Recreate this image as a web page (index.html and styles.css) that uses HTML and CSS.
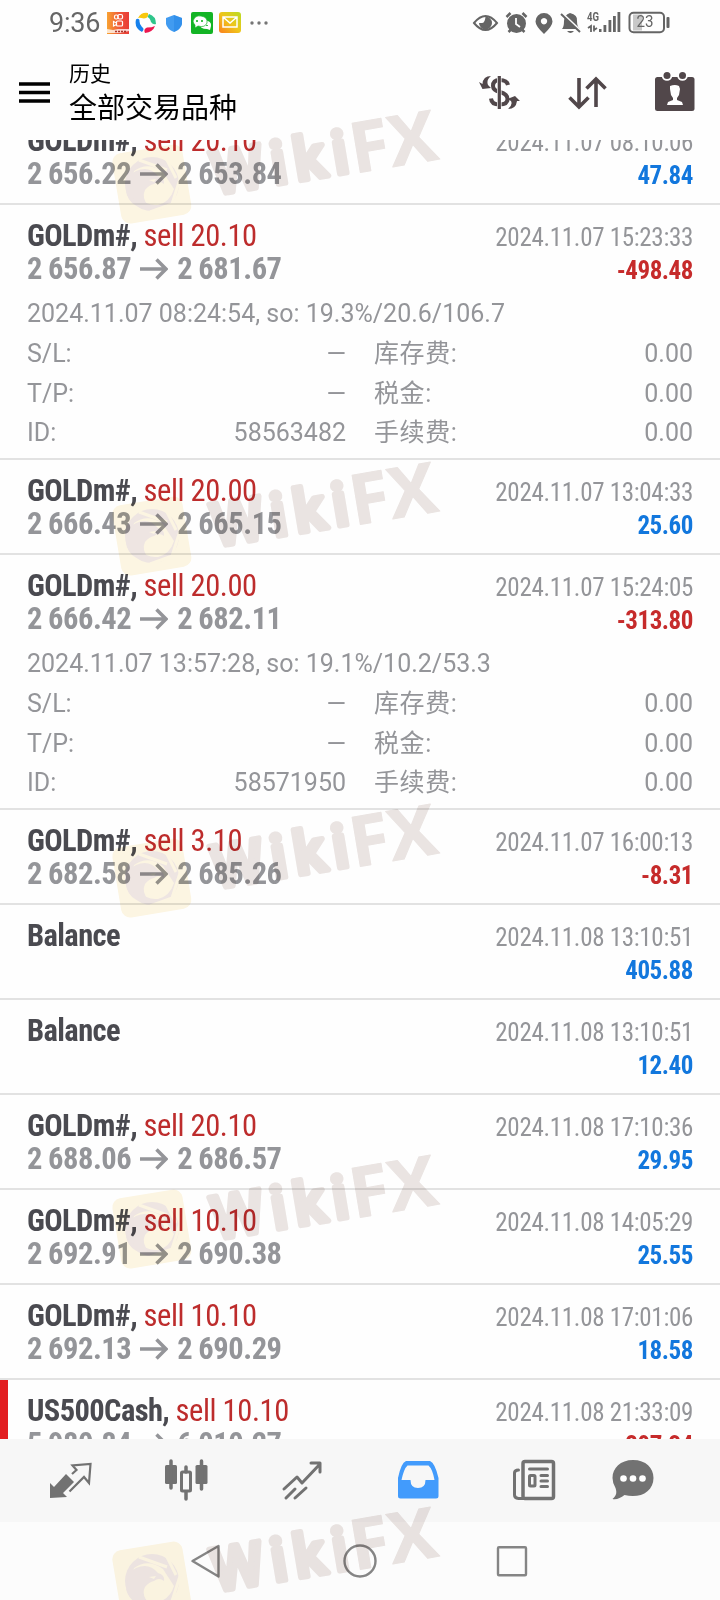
FILE: index.html
```html
<!DOCTYPE html>
<html lang="zh-CN">
<head>
<meta charset="utf-8">
<title>历史</title>
<link rel="stylesheet" href="styles.css">
</head>
<body>
<svg width="0" height="0" class="defs">
  <symbol id="arrow" viewBox="0 0 28 22"><path d="M0 11H26M16.500 1.500L26 11L16.500 20.500" fill="none" stroke="#949599" stroke-width="3.500"/></symbol>
  <symbol id="mark" viewBox="0 0 340 130" overflow="visible">
    <rect x="10.500" y="43.500" width="71" height="71" rx="9" fill="#fdf6e3" transform="rotate(-9.500 46 80)"/>
    <circle cx="46" cy="79" r="27" fill="#efe6e3"/>
    <path d="M28 66Q42 56 57 67L68 84Q64 97 52 100Q40 101 34 92L26 76Z" fill="#fdf6e3"/>
    <path d="M33 55L61 65M59 51L70 73M74 74L66 99M69 98L44 107" stroke="#fdf6e3" stroke-width="3"/>
    <path d="M23 88Q18 72 30 66Q43 60 52 71Q59 73 58 79Q53 75 48 79Q43 80 39 85Q35 93 43 102Q31 101 26 91Q25 96 30 101Q21 95 20 86Z" fill="#efe6e3"/>
    <path d="M43 75l7-1-2 3z" fill="#fdf6e3"/>
    <g transform="translate(107 92) rotate(-9.500)" fill="#ebe5e3" stroke="#ebe5e3" stroke-linejoin="round">
      <text class="mark-text" x="2" y="-2" stroke-width="5.500" textLength="138" lengthAdjust="spacing">Wiki</text>
      <text class="mark-text mark-fx" x="143" y="0" stroke-width="1" textLength="87" lengthAdjust="spacingAndGlyphs">FX</text>
    </g>
  </symbol>
</svg>
<div class="phone">
  <div class="status">
    <span class="clock">9:36</span>
    <div class="apps">
      <svg width="22" height="22" viewBox="107 12 22 22"><defs><linearGradient id="g1"><stop stop-color="#f8a332"/><stop offset=".6" stop-color="#ef5238"/><stop offset="1" stop-color="#e83c37"/></linearGradient></defs><path fill="url(#g1)" d="M107 12h22v22h-22z"/><g fill="none" stroke="#fff" stroke-width="1.200"><rect x="114.500" y="15" width="3.500" height="4" rx="1.500"/><rect x="118" y="14.500" width="4.500" height="4.500" rx="1.500"/><rect x="116.500" y="21" width="6" height="5" rx="1"/><path d="M116.500 23l-3-1.500v4.500l3-1.500"/></g><path d="M107 29l6 1 5-1 11 0v2l-9 2-13 0z" fill="#fff" opacity=".75"/><path d="M115 31.500h11" stroke="#a8332a" stroke-width="1.500" stroke-dasharray="2 1"/></svg>
      <svg width="22" height="22" viewBox="135 12 22 22"><path fill="#f9c80d" d="M138 18Q141 12 148 13Q149 18 144 18.500Q140 17.500 138 18"/><path fill="#2fc58b" d="M149 14Q156 16 156 24Q153 25 151 22Q150 18 147.500 17"/><path fill="#ed174f" d="M155 26Q153 32 145 33Q143 29 147 27.500Q152 27.500 155 26"/><path fill="#1580ec" d="M136 19.500Q134 28 142 32Q145 29 142 27Q139 24 139.500 20Q138 18 136 19.500"/></svg>
      <svg width="22" height="22" viewBox="163 12 22 22"><path fill="#419bf0" d="M174 15l8 3v6q-1 5-8 8q-7-3-8-8v-6z"/><path fill="#2386e5" d="M174 15l8 3v6q-1 5-8 8z" opacity=".5"/></svg>
      <svg width="22" height="22" viewBox="191 12 22 22"><rect x="191" y="12" width="22" height="22" rx="2" fill="#13b425"/><path fill="#fff" d="M204 20q8 1 7 6l-1 4-3-1q-7 0-8-5z"/><path d="M193 21q2-6 8-5q7 1 6 7q-2 5-9 3l-3 2v-3q-2-2-2-4" fill="#fff" stroke="#13b425" stroke-width=".7"/><path d="M197 20v2M202 20v2M207 25v1" stroke="#13b425" stroke-width="1.600"/></svg>
      <svg width="22" height="22" viewBox="219 12 22 22"><defs><linearGradient id="g2" x2="1" y1="1" y2="0"><stop stop-color="#fb7f1d"/><stop offset=".5" stop-color="#efc51b"/><stop offset="1" stop-color="#b9dc24"/></linearGradient></defs><rect x="219" y="12" width="22" height="21" rx="3" fill="url(#g2)"/><path d="M223 17h14v10h-14zl7 6 7-6" fill="none" stroke="#fff" stroke-width="1.500"/></svg>
      <svg width="22" height="22" viewBox="247 12 22 22" fill="#757575"><circle cx="252" cy="23" r="1.700"/><circle cx="259" cy="23" r="1.700"/><circle cx="266" cy="23" r="1.700"/></svg>
    </div>
    <svg class="signals" width="200" height="24" viewBox="472 11 200 24" fill="#656565">
      <path d="M474 23Q485.500 9 497 23Q485.500 37 474 23Z" fill="none" stroke="#656565" stroke-width="2"/><path d="M485.500 16.500a6.500 6.500 0 1 1-6.500 6.500h2q4 1 4.500-6.500"/>
      <circle cx="516.500" cy="23.500" r="9.500"/><path d="M506.500 17l4-4M526.500 17l-4-4M508.500 32l3-3M524.500 32l-3-3" stroke="#656565" stroke-width="2.500"/><path d="M516 18v6l4 3" stroke="#fff" stroke-width="1.800" fill="none"/>
      <path fill-rule="evenodd" d="M544 34Q535.500 26 535.500 21.500a8.500 8.500 0 0 1 17 0Q552.500 26 544 34zm0-16a3.200 3.200 0 1 0 .01 0z"/>
      <path d="M562 29q2-2 2-8 0-6 6-8 8 2 7 8 0 6 3 8zM567 31h7q-3.500 4-7 0"/><path d="M562 13l19 18" stroke="#fefefe" stroke-width="2"/><path d="M561 14l19 18" stroke="#656565" stroke-width="2"/>
      <text class="g4" x="587" y="21" textLength="12" lengthAdjust="spacingAndGlyphs">4G</text>
      <path d="M588 28l3-2v6M594 25.500v6M594 30l3-2" fill="none" stroke="#656565" stroke-width="1.800"/><path d="M599 29h2.500v3H599zM603.500 25h2.800v7h-2.800zM608.500 20h2.800v12h-2.800zM613 16h2.800v16H613zM617.500 12h2.800v20h-2.800z"/>
      <rect x="633" y="14.500" width="9" height="16" fill="#c8c8c8"/><rect x="629.500" y="12.800" width="34.500" height="19.500" rx="4" fill="none" stroke="#656565" stroke-width="2"/><rect x="666.500" y="17" width="3" height="11" rx="1"/>
      <text class="batt" x="636.500" y="27" textLength="17" lengthAdjust="spacingAndGlyphs">23</text>
    </svg>
  </div>
  <header class="header">
    <svg class="menu" width="32" height="22" viewBox="19 82 32 22"><path d="M19 84h31M19 92.500h31M19 101h31" stroke="#000" stroke-width="3.500"/></svg>
    <div class="titles"><div class="t1">历史</div><div class="t2">全部交易品种</div></div>
    <svg width="42" height="42" viewBox="479 71 42 42" fill="#51474a"><path d="M508 85Q507 80 499.500 80Q493 80 493 86Q493 90.500 500 92Q507.500 94 507.500 99Q507.500 104.500 499.500 104.500Q491.500 104.500 491 98.500" fill="none" stroke="#51474a" stroke-width="4"/><path d="M499.300 76v33" stroke="#fff" stroke-width="4.500"/><path d="M499.300 76v33" stroke="#51474a" stroke-width="3.200"/><path d="M479 82l3.500 7 8.500-1-3-3q-2-5 3-9-8 0-8.500 8zM520 101l-5-5-8 3 4 2q2 4-3 8 8 0 9-8z"/></svg>
    <svg class="sort" width="42" height="42" viewBox="567 71 42 42"><path d="M579 78v29M569.500 97.500l9.500 9.500 9.500-9.500M596 107V79M586.500 88.500L596 79l9.500 9.500" fill="none" stroke="#51474a" stroke-width="3.600"/></svg>
    <svg width="42" height="42" viewBox="654 71 42 42"><rect x="655" y="77" width="39.500" height="34" rx="2.500" fill="#51474a"/><circle cx="667" cy="75.500" r="5.300" fill="#fff"/><circle cx="682.500" cy="75.500" r="5.300" fill="#fff"/><circle cx="667" cy="75.500" r="3.500" fill="#51474a"/><circle cx="682.500" cy="75.500" r="3.500" fill="#51474a"/><path fill="#fff" d="M670 86q5-2 9 0l1 3-1 6-2 3v2l5 2 1 3h-16l1-3 5-2v-2l-2-3-1-6z"/></svg>
  </header>
  <main class="list">
    <section class="deal first"><div class="l"><div class="name"><b>GOLDm#,</b> <span>sell 20.10</span></div><div class="price">2 656.22<svg><use href="#arrow"/></svg>2 653.84</div></div><div class="r"><div class="date">2024.11.07 08:10:06</div><div class="up">47.84</div></div></section>
    <section class="deal"><div class="l"><div class="name"><b>GOLDm#,</b> <span>sell 20.10</span></div><div class="price">2 656.87<svg><use href="#arrow"/></svg>2 681.67</div></div><div class="r"><div class="date">2024.11.07 15:23:33</div><div class="down">-498.48</div></div></section>
    <div class="detail"><p>2024.11.07 08:24:54, so: 19.3%/20.6/106.7</p><dl><dt>S/L:</dt><dd>—</dd><dt class="c">库存费:</dt><dd>0.00</dd><dt>T/P:</dt><dd>—</dd><dt class="c">税金:</dt><dd>0.00</dd><dt>ID:</dt><dd>58563482</dd><dt class="c">手续费:</dt><dd>0.00</dd></dl></div>
    <section class="deal"><div class="l"><div class="name"><b>GOLDm#,</b> <span>sell 20.00</span></div><div class="price">2 666.43<svg><use href="#arrow"/></svg>2 665.15</div></div><div class="r"><div class="date">2024.11.07 13:04:33</div><div class="up">25.60</div></div></section>
    <section class="deal"><div class="l"><div class="name"><b>GOLDm#,</b> <span>sell 20.00</span></div><div class="price">2 666.42<svg><use href="#arrow"/></svg>2 682.11</div></div><div class="r"><div class="date">2024.11.07 15:24:05</div><div class="down">-313.80</div></div></section>
    <div class="detail"><p>2024.11.07 13:57:28, so: 19.1%/10.2/53.3</p><dl><dt>S/L:</dt><dd>—</dd><dt class="c">库存费:</dt><dd>0.00</dd><dt>T/P:</dt><dd>—</dd><dt class="c">税金:</dt><dd>0.00</dd><dt>ID:</dt><dd>58571950</dd><dt class="c">手续费:</dt><dd>0.00</dd></dl></div>
    <section class="deal"><div class="l"><div class="name"><b>GOLDm#,</b> <span>sell 3.10</span></div><div class="price">2 682.58<svg><use href="#arrow"/></svg>2 685.26</div></div><div class="r"><div class="date">2024.11.07 16:00:13</div><div class="down">-8.31</div></div></section>
    <section class="deal"><div class="l"><div class="name"><b>Balance</b></div></div><div class="r"><div class="date">2024.11.08 13:10:51</div><div class="up">405.88</div></div></section>
    <section class="deal"><div class="l"><div class="name"><b>Balance</b></div></div><div class="r"><div class="date">2024.11.08 13:10:51</div><div class="up">12.40</div></div></section>
    <section class="deal"><div class="l"><div class="name"><b>GOLDm#,</b> <span>sell 20.10</span></div><div class="price">2 688.06<svg><use href="#arrow"/></svg>2 686.57</div></div><div class="r"><div class="date">2024.11.08 17:10:36</div><div class="up">29.95</div></div></section>
    <section class="deal"><div class="l"><div class="name"><b>GOLDm#,</b> <span>sell 10.10</span></div><div class="price">2 692.91<svg><use href="#arrow"/></svg>2 690.38</div></div><div class="r"><div class="date">2024.11.08 14:05:29</div><div class="up">25.55</div></div></section>
    <section class="deal"><div class="l"><div class="name"><b>GOLDm#,</b> <span>sell 10.10</span></div><div class="price">2 692.13<svg><use href="#arrow"/></svg>2 690.29</div></div><div class="r"><div class="date">2024.11.08 17:01:06</div><div class="up">18.58</div></div></section>
    <section class="deal stop"><div class="l"><div class="name"><b>US500Cash,</b> <span>sell 10.10</span></div><div class="price">5 980.84<svg><use href="#arrow"/></svg>6 010.27</div></div><div class="r"><div class="date">2024.11.08 21:33:09</div><div class="down">-297.34</div></div></section>
  </main>
  <nav class="tabs">
    <div><svg width="48" height="48" viewBox="46 1456 48 48"><path d="M50 1483l4 4 12-13 8 8-11 11 4 4-17 1z" fill="#727272"/><path d="M69.500 1491.500L84 1477l5 6 1.500-19-18 1.500 4 4.500-4.500 4" fill="none" stroke="#727272" stroke-width="2.200"/></svg></div>
    <div><svg width="48" height="48" viewBox="162 1456 48 48" fill="#727272"><rect x="165" y="1465" width="12" height="19" rx="1.500"/><rect x="195.500" y="1465" width="12" height="19" rx="1.500"/><path d="M171 1461v27M201.500 1461v28M186 1467v5M186 1492v7" stroke="#727272" stroke-width="3.500" stroke-linecap="round"/><rect x="181.500" y="1472" width="9" height="19" rx="1" fill="none" stroke="#727272" stroke-width="3"/></svg></div>
    <div><svg width="48" height="48" viewBox="278 1456 48 48"><path d="M284 1489l13-12 5 6 18-19M311 1463h9v9M286 1498l9-9M295 1498l11-10" fill="none" stroke="#727272" stroke-width="3" stroke-linecap="round" stroke-linejoin="round"/></svg></div>
    <div><svg width="48" height="48" viewBox="394 1456 48 48"><path fill="#429bfc" fill-rule="evenodd" d="M406 1461h24q5 2 8.500 17v18q0 2.500-2.500 2.500h-35.500q-2.500 0-2.500-2.500v-18q3-15 8-17zm1.500 4.500q-3.500 3-6 14.500h9q0 8 7.500 8t7.500-8h9q-2-11-6-14.500z"/></svg></div>
    <div><svg width="48" height="48" viewBox="510 1456 48 48" fill="none" stroke="#727272" stroke-width="3.500"><rect x="523" y="1461.500" width="30.500" height="37" rx="2"/><path d="M518.500 1470q-4 0-4 3v22q0 3 4 3.500h6M529.500 1469h18M541 1475.500h6.500M541 1481h6.500M541 1486.500h6.500" stroke-width="3" stroke-linecap="round"/><rect x="529.500" y="1475.500" width="5.500" height="10.500" rx="1" stroke-width="3"/></svg></div>
    <div><svg width="48" height="48" viewBox="609 1456 48 48"><path fill="#727272" d="M633 1460c13 0 20.500 8 20.500 18 0 14-14 21-29 17-4 3-8 5-12 4 5-4 4-8 3-11q-3-5-3-10c0-10 8-18 20.500-18z"/><g fill="#fff"><circle cx="623.500" cy="1478.500" r="3.300"/><circle cx="633" cy="1478.500" r="3.300"/><circle cx="642.500" cy="1478.500" r="3.300"/></g></svg></div>
  </nav>
  <footer class="sys"><svg width="340" height="40" viewBox="190 1541 340 40" fill="none" stroke="#858585" stroke-width="2.400"><path d="M192.500 1561L218.500 1546v30.500z" stroke-linejoin="round"/><circle cx="360" cy="1561" r="15.500"/><rect x="498" y="1547.300" width="28" height="28" rx="1"/></svg></footer>
  <svg class="mark m1"><use href="#mark"/></svg>
  <svg class="mark m2"><use href="#mark"/></svg>
  <svg class="mark m3"><use href="#mark"/></svg>
  <svg class="mark m4"><use href="#mark"/></svg>
  <svg class="mark m5"><use href="#mark"/></svg>
</div>
</body>
</html>
```
FILE: styles.css
```css
* { box-sizing: border-box; margin: 0; padding: 0; }
body { background: #fefefe; font-family: Roboto, "Noto Sans CJK SC", sans-serif; color: #949599; }
.defs { position: absolute; }
.phone { position: relative; width: 720px; height: 1600px; overflow: hidden; display: flex; flex-direction: column; }
.status { height: 46px; display: flex; align-items: center; padding-left: 49px; }
.clock { width: 58px; font-size: 27px; color: #666; letter-spacing: -0.2px; }
.apps { display: flex; gap: 6px; }
.signals { margin-left: 203px; }
.g4 { font: bold 12px Roboto, sans-serif; }
.batt { font: 16px Roboto, sans-serif; }
.header { height: 94px; flex: none; display: flex; align-items: center; padding: 0 24px 2px 19px; }
.menu { margin-top: 2px; }
.titles { margin-left: 18px; flex: 1; color: #000; font-family: "Noto Sans CJK SC", sans-serif; font-weight: 400; }
.t1 { font-size: 21px; line-height: 32px; margin-top: -3px; }
.t2 { font-size: 28px; line-height: 37px; }
.sort { margin: 0 45px 0 46px; }
.list { height: 1299px; flex: none; overflow: hidden; background: #fefefe; }
.deal { height: 95px; display: flex; justify-content: space-between; padding: 14px 27px 0; border-top: 2px solid #e2e2e2; font-family: "Roboto Condensed", Roboto, sans-serif; font-stretch: 75%; white-space: nowrap; }
.first { margin-top: -32px; }
.stop { background: linear-gradient(#e21d20, #e21d20) 0 0 / 8px 100% no-repeat; }
.name { font-size: 30.500px; line-height: 33px; color: #bd2c2c; letter-spacing: -0.400px; word-spacing: -0.200px; }
.name b { color: #4a4a50; letter-spacing: -0.600px; }
.price { font-size: 30.500px; line-height: 33px; font-weight: 700; display: flex; align-items: center; letter-spacing: -0.450px; word-spacing: -0.500px; }
.price svg { width: 28px; height: 22px; margin: 0 9px; }
.r { text-align: right; padding-top: 2px; }
.date { font-size: 25px; line-height: 33px; letter-spacing: -0.300px; }
.up, .down { font-size: 25px; line-height: 33px; font-weight: 700; color: #1277dd; letter-spacing: -0.450px; }
.down { color: #c62b2b; }
.detail { display: flow-root; height: 160px; padding: 0 27px; font-size: 25px; }
.detail p { height: 40px; line-height: 40px; margin-top: -4px; }
.detail dl { display: grid; grid-template-columns: 140px 179px 140px 207px; grid-auto-rows: 39.600px; line-height: 40px; }
.detail dd { text-align: right; }
.detail .c { padding-left: 28px; white-space: nowrap; letter-spacing: 0.600px; }
.tabs { height: 83px; flex: none; background: #f7f7f7; display: flex; padding-left: 12px; }
.tabs div { width: 116px; display: flex; justify-content: center; padding-top: 17px; }
.tabs div:last-child { width: 82px; }
.sys { height: 78px; flex: none; background: #fcfcfc; display: flex; padding: 19px 0 0 190px; }
.mark { position: absolute; left: 106px; width: 340px; height: 130px; overflow: visible; mix-blend-mode: multiply; pointer-events: none; }
.mark-text { font: 500 60px Roboto, sans-serif; }
.mark-fx { font: bold 70px "Open Sans", sans-serif; }
.m1 { top: 105px; }
.m2 { top: 457px; }
.m3 { top: 799px; }
.m4 { top: 1150px; }
.m5 { top: 1502px; }
```
